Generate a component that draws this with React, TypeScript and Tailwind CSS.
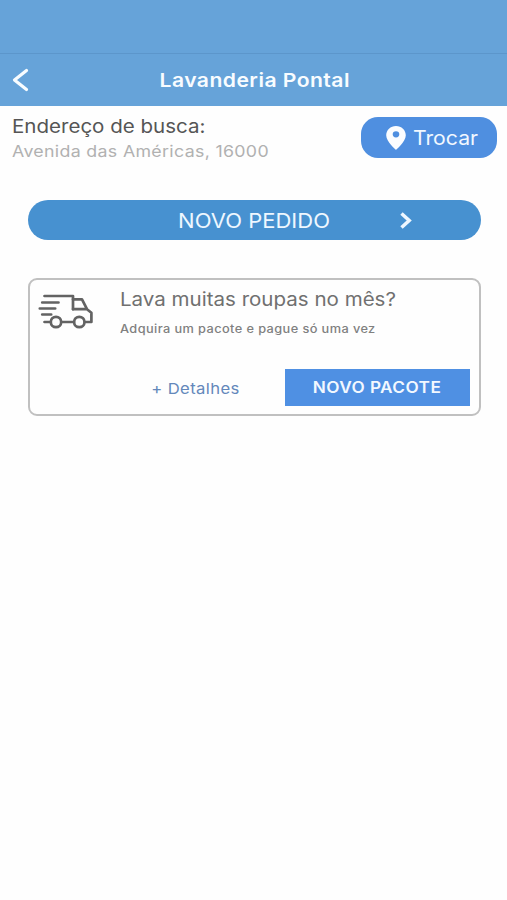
import React from 'react';

const TruckIcon = () => (
  <svg className="mt-[3px] shrink-0" width="60" height="42" viewBox="0 0 60 42" fill="none" stroke="#636363" strokeWidth="2.7" strokeLinecap="round" strokeLinejoin="round">
    <path d="M8.5 5H37v13.2M6.2 11.5h16.3M3.8 17.5h15.4M6.2 23.5h9M8.5 31h6" />
    <path d="M37 8.3h9L51 18.2H37M51 18.2l4.4 3.6V31H49M25.3 31h12.6" />
    <circle cx="20" cy="31" r="5.2" />
    <circle cx="43.3" cy="31" r="5.2" />
  </svg>
);

const PinIcon = () => (
  <svg width="20" height="24" viewBox="0 0 20 24" fill="#fbfdff">
    <path fillRule="evenodd" d="M10 0C4.5 0 .2 4.1.2 9.3C.2 15.6 10 24 10 24s9.8-8.4 9.8-14.7C19.8 4.1 15.5 0 10 0Zm0 5.2a3.3 3.1 0 1 1 0 6.2a3.3 3.1 0 1 1 0-6.2Z" />
  </svg>
);

const Header = () => (
  <header className="bg-[#66a3d9] text-[#f8fcff]">
    <div className="h-[54px] border-b border-[#5c96cb]" />
    <div className="grid h-[52px] grid-cols-[1fr_auto_1fr] items-center">
      <button className="ml-3 w-4" aria-label="Voltar">
        <svg width="17" height="24" viewBox="0 0 17 24" fill="none" stroke="currentColor" strokeWidth="3.2" strokeLinecap="round" strokeLinejoin="round">
          <path d="M14.5 2.5L2.5 12l12 9.5" />
        </svg>
      </button>
      <h1 className="mt-px ml-[3px] scale-x-[1.11] text-[19px] leading-6 font-semibold tracking-[0.42px]">Lavanderia Pontal</h1>
    </div>
  </header>
);

const App: React.FC = () => {
  return (
    <div className="min-h-[900px] w-[507px] bg-[#fefefe] font-['Inter',sans-serif]">
      <Header />

      <section className="flex h-[53px] items-start justify-between pt-[11px] pr-[10px] pl-3 whitespace-nowrap">
        <div className="-mt-[3px] origin-left scale-x-[1.11]">
          <p className="text-[18.5px] leading-6 text-[#555]">Endereço de busca:</p>
          <p className="mt-px text-[16px] leading-6 tracking-[0.3px] text-[#b1b1b1]">Avenida das Américas, 16000</p>
        </div>
        <button className="flex h-[41px] w-[136px] items-center gap-[7px] rounded-[17px] bg-[#4f8fe0] pl-[25px] text-[20px] text-[#f1f8ff]">
          <PinIcon />
          <span className="mt-px origin-left scale-x-[1.06]">Trocar</span>
        </button>
      </section>

      <main className="px-7 pt-[41px]">
        <button className="grid h-10 w-[453px] grid-cols-[1fr_auto_1fr] items-center rounded-full bg-[#4791d0] text-[#eef7ff]">
          <span />
          <span className="mt-px scale-x-[1.1] text-[20px]">NOVO PEDIDO</span>
          <svg className="ml-[76px]" width="12" height="17" viewBox="0 0 12 17" fill="none" stroke="currentColor" strokeWidth="3.5">
            <path d="M1.5 1.5L9.2 8.5l-7.7 7" />
          </svg>
        </button>

        <section className="mt-[38px] h-[138px] w-[453px] rounded-[9px] border-2 border-[#c0c0c0] pr-[9px] whitespace-nowrap">
          <div className="flex h-[60px] items-start pt-2 pl-[6px]">
            <TruckIcon />
            <div className="-mt-px ml-6 origin-left scale-x-[1.11]">
              <h2 className="text-[18.5px] leading-6 text-[#707070]">Lava muitas roupas no mês?</h2>
              <p className="mt-[10px] text-[11.5px] leading-4 font-medium tracking-[0.37px] text-[#808080]">Adquira um pacote e pague só uma vez</p>
            </div>
          </div>
          <div className="mt-[29px] flex items-center justify-end gap-[45px]">
            <button className="mt-[3px] origin-right scale-x-[1.11] text-[15px] tracking-[0.34px] text-[#6488bb]">+ Detalhes</button>
            <button className="h-[37px] w-[185px] bg-[#4f90e3] pt-px text-[15.5px] font-semibold text-[#f2f8ff]">
              <span className="mr-[2px] inline-block scale-x-[1.11] tracking-[0.4px]">NOVO PACOTE</span>
            </button>
          </div>
        </section>
      </main>
    </div>
  );
};

export default App;
